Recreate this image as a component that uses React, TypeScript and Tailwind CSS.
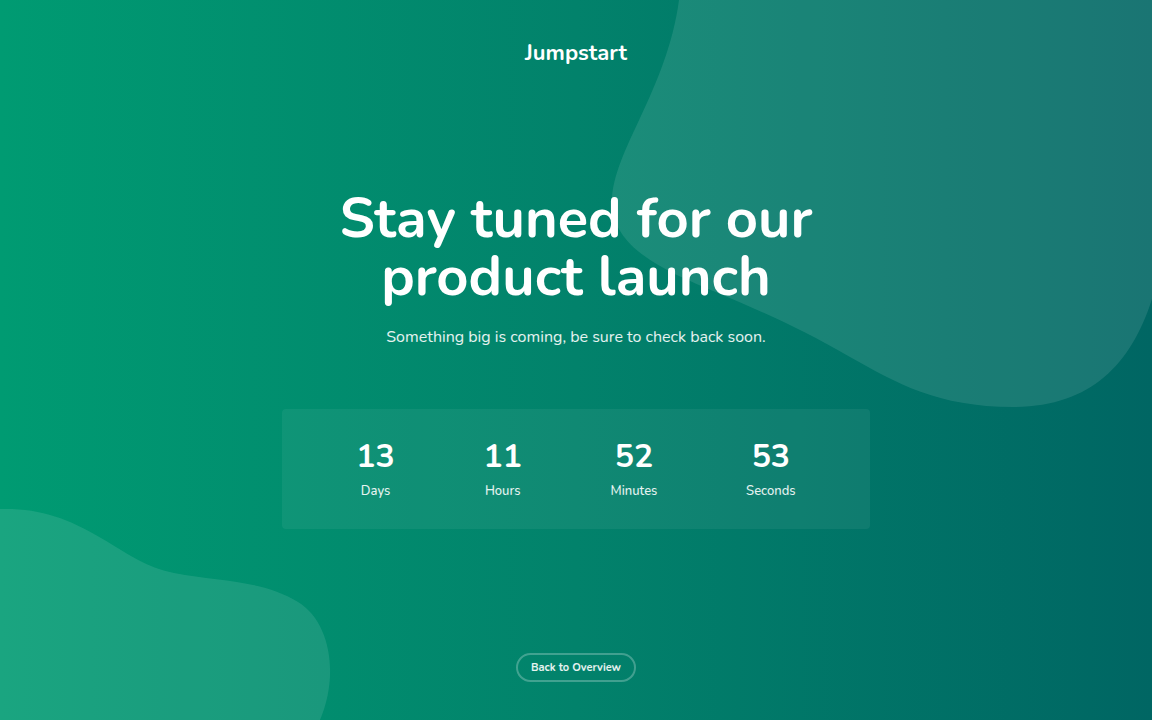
const units = [
  { value: 13, label: 'Days' },
  { value: 11, label: 'Hours' },
  { value: 52, label: 'Minutes' },
  { value: 53, label: 'Seconds' },
];

function TopBlob() {
  return (
    <svg
      aria-hidden="true"
      className="pointer-events-none absolute top-0 right-0 h-[410px] w-[544px] text-[#f0f4f8]/11"
      viewBox="608 0 544 410"
      fill="currentColor"
    >
      <path d="M679 0C667 90 612 152 612 202C612 247 662 270 718 293C770 315 803 330 850 357C896 383 938 407 1013 407C1090 407 1131 365 1152 299V0Z" />
    </svg>
  );
}

function BottomBlob() {
  return (
    <svg
      aria-hidden="true"
      className="pointer-events-none absolute bottom-0 left-0 h-[212px] w-[332px] text-[#f0f4f8]/11"
      viewBox="0 508 332 212"
      fill="currentColor"
    >
      <path d="M0 509C40 508 67 518 101 538C132 556 145 567 174 573C221 582 263 580 298 602C331 622 339 676 320 720H0Z" />
    </svg>
  );
}

export default function App() {
  return (
    <div className="relative flex min-h-screen flex-col items-center overflow-hidden bg-linear-to-r from-[#009b72] via-[#02826b] to-[#006663] font-['Nunito','Lato',sans-serif] text-white">
      <TopBlob />
      <BottomBlob />

      <header className="relative pt-9">
        <a href="#" className="block text-[22px] leading-[34px] font-bold">
          Jumpstart
        </a>
      </header>

      <main className="relative flex w-full max-w-[588px] grow flex-col items-center justify-center pb-[5px]">
        <h1 className="text-center text-[56px] leading-[58px] font-bold">
          Stay tuned for our
          <br />
          product launch
        </h1>
        <p className="mt-[17px] text-center text-base leading-7 text-white/90">
          Something big is coming, be sure to check back soon.
        </p>
        <dl className="mt-[58px] flex w-full justify-around rounded bg-white/6 px-[30px] pt-7 pb-7">
          {units.map(({ value, label }) => (
            <div key={label} className="flex flex-col-reverse items-center">
              <dt className="mt-1 text-[13px] leading-5 font-medium text-white/90">{label}</dt>
              <dd className="text-[32px] leading-10 font-bold">{value}</dd>
            </div>
          ))}
        </dl>
      </main>

      <footer className="relative pb-[38px]">
        <a
          href="#"
          className="flex h-[29px] w-[120px] items-center justify-center rounded-full border-2 border-white/25 pt-px text-[11px] font-bold text-white/90"
        >
          Back to Overview
        </a>
      </footer>
    </div>
  );
}
